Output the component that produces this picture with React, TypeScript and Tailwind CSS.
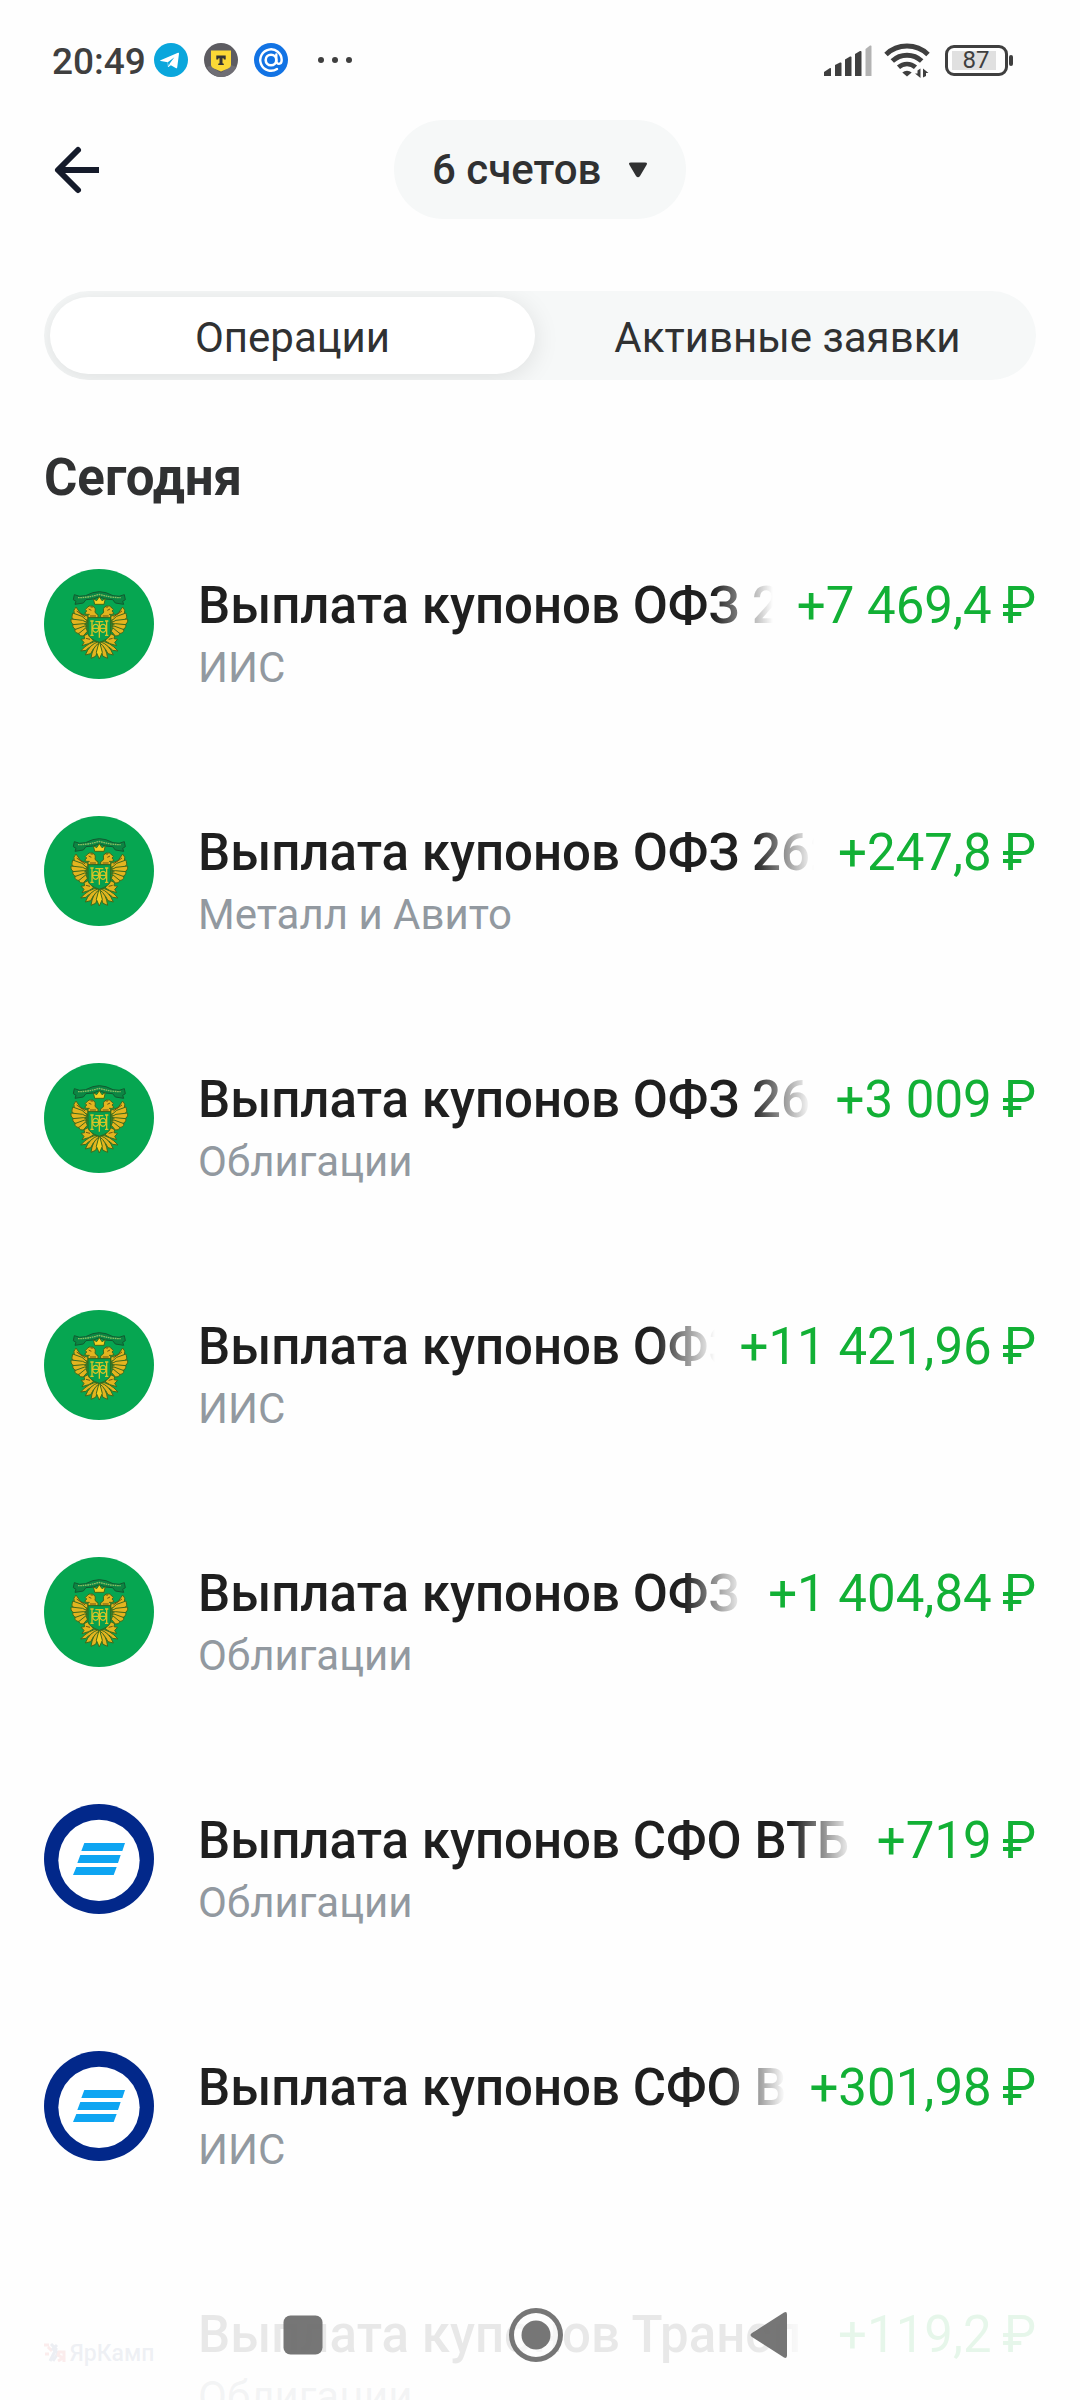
import { useState } from 'react'

type Issuer = 'minfin' | 'vtb' | 'yarkamp'

type Operation = {
  id: number
  issuer: Issuer
  title: string
  account: string
  amount: string
}

const operations: Operation[] = [
  { id: 1, issuer: 'minfin', title: 'Выплата купонов ОФЗ 2', account: 'ИИС', amount: '+7 469,4' },
  { id: 2, issuer: 'minfin', title: 'Выплата купонов ОФЗ 262', account: 'Металл и Авито', amount: '+247,8' },
  { id: 3, issuer: 'minfin', title: 'Выплата купонов ОФЗ 26', account: 'Облигации', amount: '+3 009' },
  { id: 4, issuer: 'minfin', title: 'Выплата купонов ОФЗ', account: 'ИИС', amount: '+11 421,96' },
  { id: 5, issuer: 'minfin', title: 'Выплата купонов ОФЗ', account: 'Облигации', amount: '+1 404,84' },
  { id: 6, issuer: 'vtb', title: 'Выплата купонов СФО ВТБ', account: 'Облигации', amount: '+719' },
  { id: 7, issuer: 'vtb', title: 'Выплата купонов СФО В', account: 'ИИС', amount: '+301,98' },
  { id: 8, issuer: 'yarkamp', title: 'Выплата купонов Трансп', account: 'Облигации', amount: '+119,2' },
]

const tabs = ['Операции', 'Активные заявки']

function StatusBar() {
  return (
    <div className="flex h-[120px] items-center justify-between pl-[52px] pr-[72px] text-[#3f3f3f]">
      <div className="flex items-center">
        <span className="pt-1 text-[37px] font-medium">20:49</span>
        <div className="ml-2 flex items-center gap-4">
          <svg viewBox="0 0 34 34" className="size-[34px]" aria-hidden="true">
            <circle cx="17" cy="17" r="17" fill="#0aa6dc" />
            <path d="M6.5 17.2 24 9.800c.8-.3 1.100.1 1 .9L23.200 24.400c-.2.9-.8 1.100-1.500.6l-4.800-2.800-2.200 1.600c-.5.500-.8.2-.8-.4l-.2-4.200-7-1.300c-.8-.2-.9-.5-.2-.7z" fill="#fff" />
            <path d="m13.800 19.200 6.600-5-4.500 6-1.200 3z" fill="#0aa6dc" />
          </svg>
          <svg viewBox="0 0 34 34" className="size-[34px]" aria-hidden="true">
            <circle cx="17" cy="17" r="17" fill="#5d5c61" />
            <path d="M3 24a16 16 0 0 0 14 10c7 0 13-4 15.500-10L27 22l-10 8-11-7z" fill="#6f6e75" />
            <path d="M7 7.500h20v14c0 2-1 3-3 4l-7 3-7-3c-2-1-3-2-3-4z" fill="#fbd836" />
            <path d="M12.300 12.500h9.400v4h-1.800l-.4-1.200h-1v5l1.300.5V22h-5.600v-1.200l1.300-.5v-5h-1l-.4 1.200h-1.800z" fill="#333" />
          </svg>
          <svg viewBox="0 0 34 34" className="size-[34px]" fill="none" aria-hidden="true">
            <circle cx="17" cy="17" r="17" fill="#1273e4" />
            <circle cx="17" cy="17" r="5.300" stroke="#fff" strokeWidth="2.600" />
            <path d="M22.300 11.500v6.500c0 4 5.400 4 5.400-1a10.700 10.700 0 1 0-4.700 8.900" stroke="#fff" strokeWidth="2.400" strokeLinecap="round" />
          </svg>
        </div>
        <svg viewBox="0 0 34 6" className="ml-[30px] h-1.5 w-[34px]" fill="currentColor" aria-hidden="true">
          <circle cx="3" cy="3" r="3" />
          <circle cx="17" cy="3" r="3" />
          <circle cx="31" cy="3" r="3" />
        </svg>
      </div>
      <div className="flex items-center">
        <svg viewBox="0 0 48 31" className="h-[31px] w-12" fill="currentColor" aria-hidden="true">
          <path d="M0 31v-4l6-4q1-.4 1 1v7z" />
          <path d="M11 31V20l5-2.500q1.500-.5 1.500 1V31z" />
          <path d="M21 31V14.500l5-3q1.500-.5 1.500 1V31z" />
          <path d="M31 31V9l5-3q1.500-.5 1.500 1v24z" />
          <path d="M41.500 31V4l4.500-3.500q1.500-.5 1.500 1V31z" fill="#b3b3b3" />
        </svg>
        <svg viewBox="0 0 46 36" className="ml-3 h-9 w-[46px]" fill="none" stroke="currentColor" aria-hidden="true">
          <path d="M2 12.500a30.500 30.500 0 0 1 42 0" strokeWidth="5" />
          <path d="M8.300 19a21.500 21.500 0 0 1 29.400 0" strokeWidth="5" />
          <path d="M14.500 25.300a12.600 12.600 0 0 1 17 0" strokeWidth="4.600" />
          <path d="M23 34.500 18.300 30.500a7 7 0 0 1 9.400 0z" fill="currentColor" stroke="none" />
          <path d="M36.500 26.500v9.500l-5.500-4.500h2.500v-3zM39 35.500v-9l5.500 4.500H42v3z" fill="currentColor" stroke="none" />
        </svg>
        <div className="relative ml-[15px] flex h-[31px] w-[63px] items-center rounded-[9px] border-[3px] border-current px-1">
          <div className="flex h-[19px] w-[44px] items-center justify-center bg-[#e0e0e0]">
            <span className="pl-1 text-2xl leading-none">87</span>
          </div>
          <span className="absolute -right-2 h-[11px] w-1 rounded-sm bg-current" />
        </div>
      </div>
    </div>
  )
}

// one half of the eagle, mirrored for the other side
function EagleHalf() {
  return (
    <g strokeLinejoin="round">
      <g fill="#e3b41f" stroke="#3f6a1c" strokeWidth="3">
        {/* wing feathers */}
        <path d="M84 94 62 86 48 66q-10 8-5 22l16 12 25 6z" />
        <path d="M66 94 38 84q-7 14 4 22l18 6 24-2z" />
        <path d="M68 106 33 102q-2 15 12 18l18 0 20-6z" />
        <path d="M70 116 38 119q0 14 14 15l16-6 14-8z" />
        <path d="M74 123 44 134q2 13 16 11l14-10 8-10z" />
        <path d="M78 128 56 146q4 9 14 7l12-14z" />
        {/* head and neck */}
        <path d="M114 98l-30 2q-2-10 4-12-8 2-14-3l6-7q-8-4 0-9 6-9 17-6 12 5 8 18 2 6 9 8z" />
        {/* leg */}
        <path d="M72 152l16-8 8 10 4 14-14 8-20 6 6-10-9-9 11-2z" />
        {/* tail feathers */}
        <path d="M116 168q-30 2-54 30l16-2 8-8 28-10z" />
        <path d="M116 170q-28 8-40 40l16-4 8-14 16-12z" />
        <path d="M117 174q-20 12-24 46l14-6 6-16 5-14z" />
      </g>
      <path d="M92 66h7M86 72l8 4M78 160l12 3M50 78l26 18M90 93h18" stroke="#6a5512" strokeWidth="3" fill="none" />
    </g>
  )
}

function MinfinLogo() {
  return (
    <svg viewBox="0 0 330 330" className="size-[110px]" aria-hidden="true">
      <circle cx="165" cy="165" r="165" fill="#06a651" />
      <g transform="translate(48 48)">
        <path d="M43 29q14 8 34 3 22-12 41-12t41 12q20 5 34-3l3 15-8 5 3 9-25-4-8-10q-22 0-40-8-18 8-40 8l-8 10-25 4 3-9-8-5z" fill="#0b8643" stroke="#125a30" strokeWidth="3" />
        <path d="M54 38q30 0 64-10 34 10 64 10" stroke="#8fbf62" strokeWidth="4" strokeDasharray="5 2" fill="none" />
        <EagleHalf />
        <g transform="translate(236 0) scale(-1 1)">
          <EagleHalf />
        </g>
        <path d="M104 58l-4-17 10 6 8-12 8 12 10-6-4 17z" fill="#f1cf22" stroke="#3f6a1c" strokeWidth="3" />
        <path d="M118 168l-9 34 9 20 9-20z" fill="#f1cf22" stroke="#3f6a1c" strokeWidth="3" />
        <path d="M84 98h68v48q-3 16-34 26-31-10-34-26z" fill="#06a04d" stroke="#31671f" strokeWidth="3" />
        <g fill="none" stroke="#d8c526" strokeWidth="4">
          <path d="M96 108v42M140 108v42M91 108h10M135 108h10M91 151h10M135 151h10M96 130h44M118 108v50M106 110h24" />
          <ellipse cx="107" cy="130" rx="9" ry="12" />
          <ellipse cx="129" cy="130" rx="9" ry="12" />
        </g>
      </g>
    </svg>
  )
}

function VtbLogo() {
  return (
    <svg viewBox="0 0 330 330" className="size-[110px]" aria-hidden="true">
      <circle cx="165" cy="165" r="165" fill="#02288a" />
      <circle cx="165" cy="169" r="122" fill="#fff" />
      <g fill="#0ea5f2">
        <path d="M121 117h122l-8 24H112z" />
        <path d="M109 153h121l-8 24H100z" />
        <path d="M97 189h121l-9 24H87z" />
      </g>
    </svg>
  )
}

function YarkampLogo() {
  return (
    <div className="flex size-[110px] items-center justify-center gap-1 rounded-full">
      <svg viewBox="0 0 22 20" className="h-5 w-[22px] shrink-0" fill="none" strokeWidth="3" aria-hidden="true">
        <path d="M0 2h5M4 4l4 4M5 11H1" stroke="#d94a4a" />
        <path d="M7 1l5 5-6 12M13 2l-4 4 5 4-5 8" stroke="#4a5d8c" />
        <path d="M20 19V9h-5l-1 3 5 3-5 3" stroke="#d94a4a" />
      </svg>
      <span className="text-[23px] font-medium leading-none text-[#5f6f96]">ЯрКамп</span>
    </div>
  )
}

function Logo({ issuer }: { issuer: Issuer }) {
  if (issuer === 'minfin') return <MinfinLogo />
  if (issuer === 'vtb') return <VtbLogo />
  return <YarkampLogo />
}

function OperationRow({ operation }: { operation: Operation }) {
  return (
    <li className="flex h-[247px] shrink-0 items-start gap-11">
      <div className="shrink-0">
        <Logo issuer={operation.issuer} />
      </div>
      <div className="min-w-0 flex-1 pt-[7px]">
        <div className="flex gap-6 text-[51px] leading-[60px]">
          <p className="min-w-0 flex-1 overflow-hidden whitespace-nowrap font-medium text-[#1f1f1f] [mask-image:linear-gradient(to_right,black_calc(100%-60px),transparent)]">
            {operation.title}
          </p>
          <p className="shrink-0 whitespace-nowrap text-[#12b035]">{operation.amount}{'\u2009'}₽</p>
        </div>
        <p className="text-[42px] leading-16 text-[#9299a0]">{operation.account}</p>
      </div>
    </li>
  )
}

function SystemNav() {
  return (
    <nav className="fixed inset-x-0 bottom-0 flex h-[130px] items-center justify-center gap-[177px] bg-[#fefefe]/90 pr-2 text-[#6f6f6f]/95">
      <button type="button" aria-label="Недавние">
        <svg viewBox="0 0 56 56" className="size-14" fill="currentColor">
          <rect x="8.500" y="8.500" width="39" height="39" rx="7" />
        </svg>
      </button>
      <button type="button" aria-label="Домой">
        <svg viewBox="0 0 56 56" className="size-14" fill="currentColor">
          <circle cx="28" cy="28" r="22.500" fill="#fefefe" fillOpacity="0.7" />
          <path d="M28 1a27 27 0 1 0 0 54 27 27 0 0 0 0-54zm0 5a22 22 0 1 1 0 44 22 22 0 0 1 0-44z" />
          <circle cx="28" cy="28" r="14.500" />
        </svg>
      </button>
      <button type="button" aria-label="Назад">
        <svg viewBox="0 0 56 56" className="size-14" fill="currentColor">
          <path d="M11 26 43 5.500q3-1.500 3 2v41q0 3.500-3 2L11 30q-3-2 0-4z" />
        </svg>
      </button>
    </nav>
  )
}

export default function App() {
  const [activeTab, setActiveTab] = useState(tabs[0])

  return (
    <main className="flex h-screen flex-col overflow-hidden bg-[#fefefe] font-[Roboto,sans-serif] text-[#303132]">
      <StatusBar />

      <header className="grid grid-cols-[1fr_auto_1fr] items-center px-11">
        <a href="#back" aria-label="Назад" className="justify-self-start text-[#151b2b]">
          <svg viewBox="0 0 66 66" className="size-[66px]" fill="none" stroke="currentColor" strokeWidth="6">
            <path d="M55 33H15" />
            <path d="M34 13 14 33 34 53" strokeLinecap="round" strokeLinejoin="round" />
          </svg>
        </a>
        <div className="relative flex items-center">
          <select aria-label="Счета" className="h-[99px] appearance-none rounded-full bg-[#f6f8f8] pl-[38px] pr-[84px] text-[42px] font-medium">
            <option>6 счетов</option>
          </select>
          <svg viewBox="0 0 20 16" className="pointer-events-none absolute right-[38px] h-4 w-5" fill="currentColor" aria-hidden="true">
            <path d="M3 .500h14q3 0 1.500 2.500L12 14q-2 2.500-4 0L1.500 3Q0 .500 3 .500z" />
          </svg>
        </div>
      </header>

      <div role="tablist" className="mx-11 mt-[72px] grid shrink-0 grid-cols-2 gap-2.5 overflow-hidden rounded-full bg-[#f6f8f8] p-1.5">
        {tabs.map((tab) => (
          <button
            key={tab}
            type="button"
            role="tab"
            aria-selected={tab === activeTab}
            onClick={() => setActiveTab(tab)}
            className={
              tab === activeTab
                ? 'h-[77px] rounded-full bg-white pt-1 text-[42px] shadow-[0_4px_26px_rgba(0,0,0,0.10)]'
                : 'h-[77px] rounded-full pt-1 text-[42px]'
            }
          >
            {tab}
          </button>
        ))}
      </div>

      <section className="flex min-h-0 flex-1 flex-col px-11 pt-[68px]">
        <h2 className="text-[51px] font-bold leading-[60px]">Сегодня</h2>
        <ul className="mt-[61px] flex min-h-0 flex-1 flex-col overflow-hidden">
          {operations.map((operation) => (
            <OperationRow key={operation.id} operation={operation} />
          ))}
        </ul>
      </section>

      <SystemNav />
    </main>
  )
}
